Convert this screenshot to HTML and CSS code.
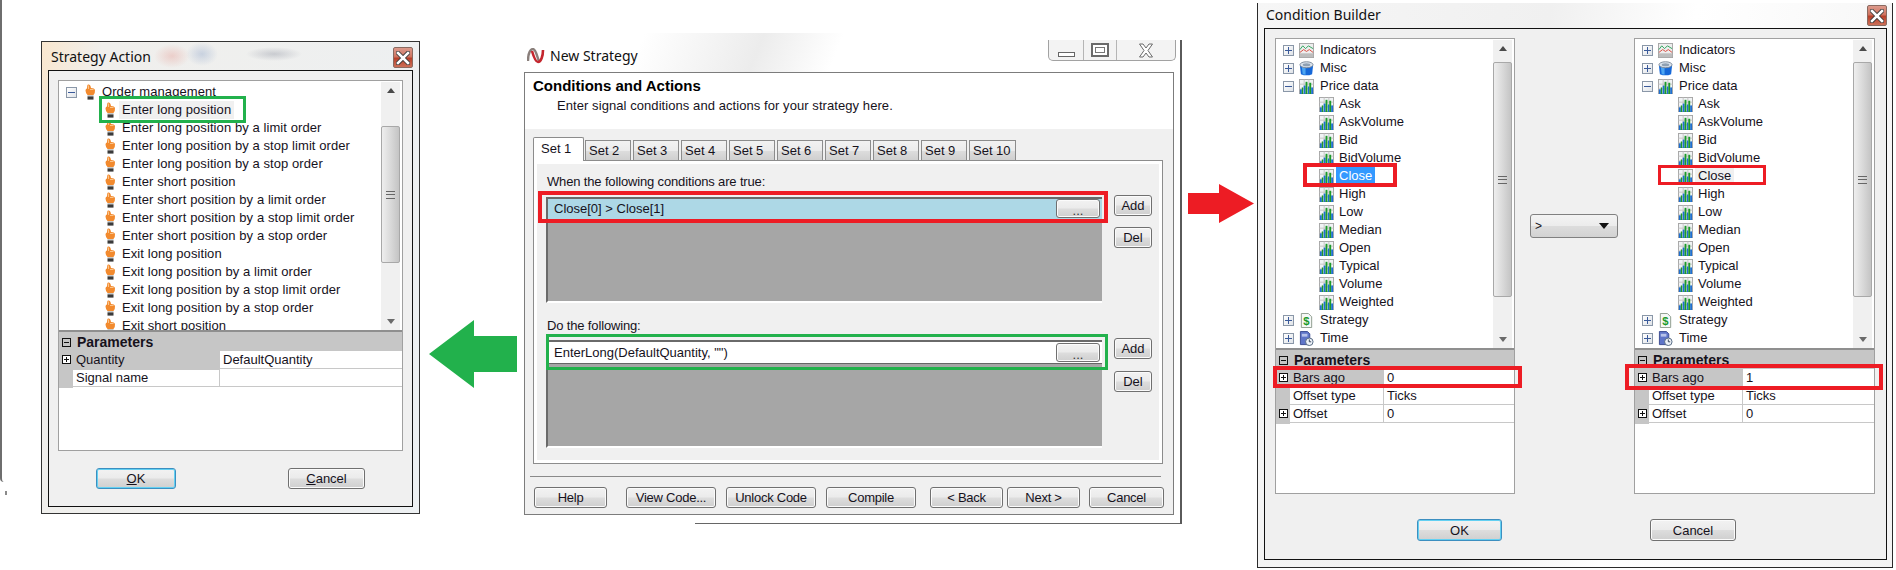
FILE: index.html
```html
<!DOCTYPE html>
<html lang="en">
<head>
<meta charset="utf-8">
<title>Strategy builder walkthrough</title>
<link rel="stylesheet" href="styles.css">
</head>
<body>
<svg class="defs" width="0" height="0" aria-hidden="true">
  <defs>
    <symbol id="hand" viewBox="0 0 11 16">
      <path d="M3 0.5 Q5 0 5.5 2 L6 4 Q9.5 4 10 6 Q10.3 9 8.5 11 L2.5 11 Q0.5 9 0.5 6.5 Q0.7 4.5 2 4.5 L2.2 2 Q2.4 0.8 3 0.5 Z" fill="#f28a2e"/>
      <path d="M3.5 1.5 L3.5 5 M5 5.5 L8.5 5.5" stroke="#fbc48a" stroke-width="1" fill="none"/>
      <rect x="2.5" y="11" width="6" height="1.4" fill="#c8c8c8"/>
      <rect x="2.5" y="12.4" width="6" height="3.2" fill="#3a3a3a"/>
    </symbol>
    <symbol id="bars" viewBox="0 0 16 16">
      <rect x="0.5" y="0.5" width="15" height="15" fill="#f1f3f5" stroke="#a5a5a5"/>
      <path d="M0.5 5.5H15.5M0.5 10.5H15.5M5.5 0.5V15.5M10.5 0.5V15.5" stroke="#c4c4c4"/>
      <rect x="1" y="11" width="2" height="5" fill="#1f6fd0"/>
      <rect x="3" y="9" width="1.5" height="7" fill="#1c9a2a"/>
      <rect x="5" y="7" width="2" height="9" fill="#1f6fd0"/>
      <rect x="7" y="3" width="2" height="13" fill="#1c9a2a"/>
      <rect x="9.5" y="8" width="1.5" height="8" fill="#1f6fd0"/>
      <rect x="11" y="4" width="2" height="12" fill="#1c9a2a"/>
      <rect x="13" y="9" width="2" height="7" fill="#1f6fd0"/>
    </symbol>
    <symbol id="lines" viewBox="0 0 16 16">
      <rect x="0.5" y="0.5" width="15" height="15" fill="#eeeeee" stroke="#a5a5a5"/>
      <rect x="1" y="11" width="14" height="4" fill="#bdbdbd"/>
      <path d="M1 7 L4 3 L7 6 L10 3 L15 6" stroke="#2aa35a" fill="none"/>
      <path d="M1 10 L5 7 L8 9 L11 7 L15 10" stroke="#d8463c" fill="none"/>
    </symbol>
    <symbol id="bucket" viewBox="0 0 16 16">
      <path d="M1 5 L2 14 Q8 16.5 14 14 L15 5 Z" fill="#1668d8"/>
      <path d="M3 6 L4 14 L7 14.6 L7 6 Z" fill="#4da6f2"/>
      <ellipse cx="8" cy="4" rx="7" ry="3.2" fill="#d9e2ec" stroke="#7d8a99"/>
      <ellipse cx="8" cy="4" rx="4" ry="1.6" fill="#8fa0b2"/>
    </symbol>
    <symbol id="doc" viewBox="0 0 16 16">
      <path d="M2.5 0.5 H10 L13.5 4 V15.5 H2.5 Z" fill="#f6f8f6" stroke="#8c9a8c"/>
      <text x="8" y="12.5" class="doc-s">$</text>
    </symbol>
    <symbol id="clock" viewBox="0 0 16 16">
      <path d="M1.5 0.5 H9 L11.5 3 V14.5 H1.5 Z" fill="#5f75c8" stroke="#3a4a90"/>
      <rect x="3" y="3" width="6" height="3" fill="#b7c3ea"/>
      <circle cx="11" cy="11.5" r="4" fill="#eef2f8" stroke="#4f647e"/>
      <path d="M11 9 V11.5 H13" stroke="#2f3f55" fill="none"/>
    </symbol>
    <symbol id="x" viewBox="0 0 14 14">
      <path d="M2 2 L12 12 M12 2 L2 12" stroke="#3a3a3a" stroke-width="4.4" stroke-linecap="square"/>
      <path d="M2 2 L12 12 M12 2 L2 12" stroke="#ffffff" stroke-width="2.6" stroke-linecap="square"/>
    </symbol>
  </defs>
</svg>

<div class="desk-edge"></div>
<div class="desk-speck"></div>

<section class="win win-action">
  <header class="titlebar"><span class="title">Strategy Action</span>
    <span class="close-btn"><svg width="14" height="14"><use href="#x"/></svg></span>
  </header>
  <div class="frame frame-action">
    <div class="panel panel-action">
      <div class="tree tree-action">
        <ul class="tree-list">
          <li class="row hand-root"><span class="exp minus"></span><svg class="ic-hand"><use href="#hand"/></svg>Order management</li>
          <li class="row hand-child"><svg class="ic-hand"><use href="#hand"/></svg><span class="sel">Enter long position</span></li>
          <li class="row hand-child"><svg class="ic-hand"><use href="#hand"/></svg>Enter long position by a limit order</li>
          <li class="row hand-child"><svg class="ic-hand"><use href="#hand"/></svg>Enter long position by a stop limit order</li>
          <li class="row hand-child"><svg class="ic-hand"><use href="#hand"/></svg>Enter long position by a stop order</li>
          <li class="row hand-child"><svg class="ic-hand"><use href="#hand"/></svg>Enter short position</li>
          <li class="row hand-child"><svg class="ic-hand"><use href="#hand"/></svg>Enter short position by a limit order</li>
          <li class="row hand-child"><svg class="ic-hand"><use href="#hand"/></svg>Enter short position by a stop limit order</li>
          <li class="row hand-child"><svg class="ic-hand"><use href="#hand"/></svg>Enter short position by a stop order</li>
          <li class="row hand-child"><svg class="ic-hand"><use href="#hand"/></svg>Exit long position</li>
          <li class="row hand-child"><svg class="ic-hand"><use href="#hand"/></svg>Exit long position by a limit order</li>
          <li class="row hand-child"><svg class="ic-hand"><use href="#hand"/></svg>Exit long position by a stop limit order</li>
          <li class="row hand-child"><svg class="ic-hand"><use href="#hand"/></svg>Exit long position by a stop order</li>
          <li class="row hand-child"><svg class="ic-hand"><use href="#hand"/></svg>Exit short position</li>
        </ul>
        <div class="sb sb-action"><span class="sb-up"></span><span class="thumb"><i></i></span><span class="sb-down"></span></div>
      </div>
      <div class="params params-action">
        <div class="p-head"><span class="gexp minus"></span>Parameters</div>
        <div class="p-row"><span class="p-gut"><span class="gexp plus"></span></span><span class="p-name grey">Quantity</span><span class="p-val">DefaultQuantity</span></div>
        <div class="p-row"><span class="p-gut"></span><span class="p-name">Signal name</span><span class="p-val"></span></div>
      </div>
    </div>
    <div class="foot foot-action">
      <button class="btn btn-def w80"><u>O</u>K</button>
      <button class="btn w77"><u>C</u>ancel</button>
    </div>
  </div>
  <div class="hl hl-green hl-enter"></div>
</section>

<svg class="arrow arrow-green" viewBox="0 0 88 68" aria-hidden="true"><path d="M0 34 L45 0 V16 H88 V52 H45 V68 Z" fill="#22b14c"/></svg>

<section class="win win-new">
  <header class="titlebar titlebar-new">
    <svg class="logo" width="18" height="16" viewBox="0 0 18 16"><path d="M1 13 C1 4 4 1 6 1 C9 1 10 9 12 13" fill="none" stroke="#8a7f7b" stroke-width="2.4"/><path d="M5 3 C7 10 9 14 11 14 C14 14 16 8 16 2" fill="none" stroke="#c4262e" stroke-width="2.6"/></svg>
    <span class="title">New Strategy</span>
    <div class="winctl"><span class="wc wc-min"><i></i></span><span class="wc wc-max"><i></i></span><span class="wc wc-close"><svg width="16" height="15" viewBox="0 0 16 15"><path d="M1.5 1H5L8 5 11 1H14.5L10 7.5 14.5 14H11L8 10 5 14H1.5L6 7.5Z" fill="#fff" stroke="#6b6b6b"/></svg></span></div>
  </header>
  <div class="frame frame-new">
    <div class="wiz-head">
      <div class="wiz-title">Conditions and Actions</div>
      <div class="wiz-sub">Enter signal conditions and actions for your strategy here.</div>
    </div>
    <div class="tabs">
      <span class="tab tab-on">Set 1</span><span class="tab">Set 2</span><span class="tab">Set 3</span><span class="tab">Set 4</span><span class="tab">Set 5</span><span class="tab">Set 6</span><span class="tab">Set 7</span><span class="tab">Set 8</span><span class="tab">Set 9</span><span class="tab tab-last">Set 10</span>
    </div>
    <div class="pane">
      <div class="lbl">When the following conditions are true:</div>
      <div class="block">
        <div class="cgrid">
          <div class="crow crow-blue"><span class="ctext">Close[0] &gt; Close[1]</span><button class="btn btn-dots">...</button></div>
        </div>
        <div class="side"><button class="btn btn-side">Add</button><button class="btn btn-side">Del</button></div>
      </div>
      <div class="lbl lbl-2">Do the following:</div>
      <div class="block block-2">
        <div class="cgrid">
          <div class="crow"><span class="ctext">EnterLong(DefaultQuantity, "")</span><button class="btn btn-dots">...</button></div>
        </div>
        <div class="side side-2"><button class="btn btn-side">Add</button><button class="btn btn-side">Del</button></div>
      </div>
    </div>
    <div class="sep"></div>
    <div class="wiz-foot">
      <button class="btn w73">Help</button>
      <button class="btn w90 m19">View Code...</button>
      <button class="btn w90 m10">Unlock Code</button>
      <button class="btn w90 m10">Compile</button>
      <button class="btn w73 m14">&lt; Back</button>
      <button class="btn w73 m4">Next &gt;</button>
      <button class="btn w75 m9">Cancel</button>
    </div>
  </div>
  <div class="hl hl-red hl-cond"></div>
  <div class="hl hl-green hl-do"></div>
  <div class="win-new-line"></div>
</section>

<svg class="arrow arrow-red" viewBox="0 0 66 39" aria-hidden="true"><path d="M0 9 H31 V0 L66 19.5 L31 39 V30 H0 Z" fill="#ed1c24"/></svg>

<section class="win win-cond">
  <header class="titlebar titlebar-cond"><span class="title">Condition Builder</span>
    <span class="close-btn close-cond"><svg width="14" height="14"><use href="#x"/></svg></span>
  </header>
  <div class="frame frame-cond">
    <div class="cb-main">
      <div class="panel panel-cb">
        <div class="tree tree-cb">
          <ul class="tree-list">
            <li class="row root"><span class="exp plus"></span><svg class="ic"><use href="#lines"/></svg>Indicators</li>
            <li class="row root"><span class="exp plus"></span><svg class="ic"><use href="#bucket"/></svg>Misc</li>
            <li class="row root"><span class="exp minus"></span><svg class="ic"><use href="#bars"/></svg>Price data</li>
            <li class="row child"><svg class="ic"><use href="#bars"/></svg>Ask</li>
            <li class="row child"><svg class="ic"><use href="#bars"/></svg>AskVolume</li>
            <li class="row child"><svg class="ic"><use href="#bars"/></svg>Bid</li>
            <li class="row child"><svg class="ic"><use href="#bars"/></svg>BidVolume</li>
            <li class="row child"><svg class="ic"><use href="#bars"/></svg><span class="sel sel-blue">Close</span></li>
            <li class="row child"><svg class="ic"><use href="#bars"/></svg>High</li>
            <li class="row child"><svg class="ic"><use href="#bars"/></svg>Low</li>
            <li class="row child"><svg class="ic"><use href="#bars"/></svg>Median</li>
            <li class="row child"><svg class="ic"><use href="#bars"/></svg>Open</li>
            <li class="row child"><svg class="ic"><use href="#bars"/></svg>Typical</li>
            <li class="row child"><svg class="ic"><use href="#bars"/></svg>Volume</li>
            <li class="row child"><svg class="ic"><use href="#bars"/></svg>Weighted</li>
            <li class="row root"><span class="exp plus"></span><svg class="ic"><use href="#doc"/></svg>Strategy</li>
            <li class="row root"><span class="exp plus"></span><svg class="ic"><use href="#clock"/></svg>Time</li>
          </ul>
          <div class="sb sb-cb"><span class="sb-up"></span><span class="thumb"><i></i></span><span class="sb-down"></span></div>
        </div>
        <div class="params params-cb">
          <div class="p-head"><span class="gexp minus"></span>Parameters</div>
          <div class="p-row"><span class="p-gut"><span class="gexp plus"></span></span><span class="p-name grey">Bars ago</span><span class="p-val">0</span></div>
          <div class="p-row"><span class="p-gut"></span><span class="p-name">Offset type</span><span class="p-val">Ticks</span></div>
          <div class="p-row"><span class="p-gut"><span class="gexp plus"></span></span><span class="p-name">Offset</span><span class="p-val">0</span></div>
        </div>
      </div>
      <div class="combo"><span>&gt;</span><i class="combo-arrow"></i></div>
      <div class="panel panel-cb panel-cb-r">
        <div class="tree tree-cb">
          <ul class="tree-list">
            <li class="row root"><span class="exp plus"></span><svg class="ic"><use href="#lines"/></svg>Indicators</li>
            <li class="row root"><span class="exp plus"></span><svg class="ic"><use href="#bucket"/></svg>Misc</li>
            <li class="row root"><span class="exp minus"></span><svg class="ic"><use href="#bars"/></svg>Price data</li>
            <li class="row child"><svg class="ic"><use href="#bars"/></svg>Ask</li>
            <li class="row child"><svg class="ic"><use href="#bars"/></svg>AskVolume</li>
            <li class="row child"><svg class="ic"><use href="#bars"/></svg>Bid</li>
            <li class="row child"><svg class="ic"><use href="#bars"/></svg>BidVolume</li>
            <li class="row child"><svg class="ic"><use href="#bars"/></svg><span class="sel">Close</span></li>
            <li class="row child"><svg class="ic"><use href="#bars"/></svg>High</li>
            <li class="row child"><svg class="ic"><use href="#bars"/></svg>Low</li>
            <li class="row child"><svg class="ic"><use href="#bars"/></svg>Median</li>
            <li class="row child"><svg class="ic"><use href="#bars"/></svg>Open</li>
            <li class="row child"><svg class="ic"><use href="#bars"/></svg>Typical</li>
            <li class="row child"><svg class="ic"><use href="#bars"/></svg>Volume</li>
            <li class="row child"><svg class="ic"><use href="#bars"/></svg>Weighted</li>
            <li class="row root"><span class="exp plus"></span><svg class="ic"><use href="#doc"/></svg>Strategy</li>
            <li class="row root"><span class="exp plus"></span><svg class="ic"><use href="#clock"/></svg>Time</li>
          </ul>
          <div class="sb sb-cb"><span class="sb-up"></span><span class="thumb"><i></i></span><span class="sb-down"></span></div>
        </div>
        <div class="params params-cb">
          <div class="p-head"><span class="gexp minus"></span>Parameters</div>
          <div class="p-row"><span class="p-gut"><span class="gexp plus"></span></span><span class="p-name grey">Bars ago</span><span class="p-val">1</span></div>
          <div class="p-row"><span class="p-gut"></span><span class="p-name">Offset type</span><span class="p-val">Ticks</span></div>
          <div class="p-row"><span class="p-gut"><span class="gexp plus"></span></span><span class="p-name">Offset</span><span class="p-val">0</span></div>
        </div>
      </div>
    </div>
    <div class="foot foot-cond">
      <button class="btn btn-def w85">OK</button>
      <button class="btn w86">Cancel</button>
    </div>
  </div>
  <div class="hl hl-red hl-close-l"></div>
  <div class="hl hl-red hl-close-r"></div>
  <div class="hl hl-red hl-bars-l"></div>
  <div class="hl hl-red hl-bars-r"></div>
</section>
</body>
</html>
```
FILE: styles.css
```css
* { box-sizing: border-box; }
html, body { margin: 0; padding: 0; }
body {
  width: 1896px;
  height: 570px;
  position: relative;
  overflow: hidden;
  background: #ffffff;
  font-family: "Liberation Sans", Arial, sans-serif;
  font-size: 13px;
  color: #16121c;
}
ul { list-style: none; margin: 0; padding: 0; }
.defs { position: absolute; }
.doc-s { font: bold 12px "Liberation Sans", sans-serif; fill: #1c9a2a; text-anchor: middle; }

.desk-edge {
  position: absolute; left: 0; top: 0; width: 4px; height: 482px;
  border-left: 2px solid #6e6e6e; border-bottom-left-radius: 4px;
}
.desk-speck { position: absolute; left: 5px; top: 491px; width: 2px; height: 4px; background: #8a8a8a; }

/* windows */
.win { position: absolute; }
.win-action {
  left: 41px; top: 41px; width: 379px; height: 473px;
  border: 1px solid #333;
  padding: 0 6px 6px;
  background:
    radial-gradient(ellipse 18px 12px at 130px 14px, rgba(225,130,120,.3), transparent),
    radial-gradient(ellipse 16px 12px at 160px 12px, rgba(110,140,190,.3), transparent),
    radial-gradient(ellipse 28px 7px at 232px 12px, rgba(130,135,150,.35), transparent),
    linear-gradient(100deg, #f9e7cf 0, #f0efec 60px, #edf0f2 100%);
}
.win-new {
  left: 518px; top: 33px; width: 664px; height: 491px;
  padding: 0 6px 8px;
}
.win-new::after { content: ""; position: absolute; right: 0; top: 7px; bottom: 0; width: 2px; background: #5a5a5a; }
.win-new-line { position: absolute; left: 177px; right: 0; bottom: 0; height: 1px; background: #666; }
.win-cond {
  left: 1257px; top: 3px; width: 636px; height: 565px;
  border: 1px solid #2a2a2a;
  border-top: 0;
  padding: 0 5px 6px 6px;
  background: linear-gradient(100deg, #f6f6f6 0, #f0f0f0 40%, #fff 60%, #f3f3f3 100%);
}

.titlebar { display: flex; align-items: center; height: 28px; padding-left: 3px; position: relative; }
.titlebar-new {
  height: 39px; padding: 6px 0 0 3px;
  background: linear-gradient(112deg, #fff 18%, #ececec 36%, #fff 48%, #fff 100%);
}
.titlebar-cond { height: 25px; padding: 0 0 2px 2px; }
.title { font: 14px "Noto Sans", sans-serif; color: #111; }
.titlebar-new .title { margin-left: 5px; }
.close-btn {
  position: absolute; right: 0; top: 5px; width: 20px; height: 21px;
  display: flex; align-items: center; justify-content: center;
  border: 1px solid #8a6a60; border-radius: 2px;
  background: linear-gradient(#dc9a8c 0, #cf7460 45%, #b8402a 55%, #cc6f58 100%);
}
.close-cond { top: 2px; }

.winctl {
  position: absolute; right: 0; top: 7px; width: 128px; height: 21px;
  display: flex;
  border: 1px solid #a2a2a2; border-top: 0;
  border-radius: 0 0 5px 5px;
  background: #f3f3f3;
}
.wc { position: relative; display: flex; justify-content: center; border-right: 1px solid #b5b5b5; }
.wc-min { width: 35px; }
.wc-max { width: 33px; }
.wc-close { flex: 1; border-right: 0; padding-top: 3px; }
.wc-min i { display: block; width: 17px; height: 5px; margin-top: 12px; border: 1px solid #666; background: #fff; }
.wc-max i { display: block; width: 18px; height: 14px; margin-top: 3px; border: 2px solid #6a6a6a; background: #fff; box-shadow: inset 0 0 0 2px #fff, inset 0 0 0 3px #777; }

.frame { border: 1px solid #111; background: #f0f0f0; }
.frame-action { height: 437px; padding: 9px 9px 0; }
.frame-new { height: 443px; width: 650px; border-color: #7c7c7c; }
.frame-cond { height: 532px; padding: 9px 0 0 10px; }

/* tree panel */
.panel { border: 1px solid #a0a0a0; background: #fff; display: flex; flex-direction: column; }
.panel-action { width: 345px; height: 371px; }
.panel-cb { width: 240px; height: 456px; }
.panel-cb-r { width: 241px; }
.tree { display: flex; border-bottom: 2px solid #8f8f8f; overflow: hidden; }
.tree-action { height: 251px; letter-spacing: .08px; }
.tree-cb { height: 311px; }
.tree-list { flex: 1; min-width: 0; padding-top: 2px; }
.row { height: 18px; line-height: 18px; display: flex; align-items: center; white-space: nowrap; }
.root { padding-left: 7px; }
.child { padding-left: 43px; }
.hand-root { padding-left: 7px; }
.hand-child { padding-left: 46px; }
.ic { width: 15px; height: 15px; margin-right: 6px; flex: none; }
.child .ic { margin-right: 5px; }
.exp {
  width: 11px; height: 11px; flex: none; margin-right: 5px; position: relative;
  border: 1px solid #8a97a8;
  background: linear-gradient(135deg, #fff, #dfe3e8);
}
.exp::before { content: ""; position: absolute; left: 1px; right: 1px; top: 4px; height: 1px; background: #3a5a9a; }
.exp.plus::after { content: ""; position: absolute; top: 1px; bottom: 1px; left: 4px; width: 1px; background: #3a5a9a; }
.ic-hand { width: 11px; height: 16px; flex: none; margin-right: 6px; }
.hand-root .exp { margin-right: 8px; }
.sel { background: #f0f0f0; padding: 0 3px; margin-left: -3px; height: 18px; }
.sel-blue { background: #3399ff; color: #fff; }

/* scrollbars */
.sb { width: 19px; flex: none; display: flex; flex-direction: column; background: #f0f0f0; margin: 1px 2px 0 0; }
.sb-up, .sb-down { flex: none; height: 17px; display: flex; align-items: center; justify-content: center; }
.sb-up::before { content: ""; border: 4px solid transparent; border-top: 0; border-bottom: 5px solid #4a4a4a; }
.sb-down::before { content: ""; border: 4px solid transparent; border-bottom: 0; border-top: 5px solid #6a6a6a; }
.thumb {
  display: flex; align-items: center; justify-content: center;
  margin-left: 0; border: 1px solid #a8a8a8; border-radius: 2px;
  background: linear-gradient(90deg, #eeeeee 0, #dcdcdc 45%, #c4c4c4 100%);
}
.thumb i { width: 9px; height: 8px; border-top: 1px solid #666; border-bottom: 1px solid #666; position: relative; display: block; }
.thumb i::after { content: ""; position: absolute; left: 0; right: 0; top: 2px; height: 2px; border-top: 1px solid #666; }
.sb-action .thumb { height: 137px; margin-top: 27px; margin-bottom: auto; }
.sb-cb .thumb { height: 235px; margin-top: 5px; margin-bottom: auto; }

/* parameter grid */
.p-head { height: 19px; display: flex; align-items: center; background: #c6c6c6; font-weight: bold; font-size: 14px; padding: 1px 0 0 3px; }
.p-head .gexp { margin-right: 6px; }
.p-row { height: 18px; line-height: 18px; display: grid; border-bottom: 1px solid #c8c8c8; background: #fff; }
.params-action .p-row { grid-template-columns: 14px 147px 1fr; }
.params-cb .p-row { grid-template-columns: 14px 94px 1fr; }
.p-gut { background: #c6c6c6; padding: 4px 0 0 3px; margin-bottom: -1px; }
.p-name { padding-left: 3px; border-right: 1px solid #c8c8c8; }
.p-name.grey { background: #c6c6c6; border-right-color: #c6c6c6; margin-bottom: -1px; }
.p-val { padding-left: 3px; }
.gexp {
  display: block; width: 9px; height: 9px; position: relative; flex: none;
  border: 1px solid #111; background: #fff;
}
.gexp::before { content: ""; position: absolute; left: 1px; right: 1px; top: 3px; height: 1px; background: #111; }
.gexp.plus::after { content: ""; position: absolute; top: 1px; bottom: 1px; left: 3px; width: 1px; background: #111; }
.gexp.minus { background: transparent; }

/* buttons */
.btn {
  font: 13px "Liberation Sans", Arial, sans-serif; color: #16121c;
  height: 21px; padding: 0;
  border: 1px solid #707070; border-radius: 3px;
  background: linear-gradient(#f2f2f2 0, #ebebeb 48%, #dddddd 52%, #cfcfcf 100%);
  box-shadow: inset 0 0 0 1px #fbfbfb;
}
.btn-def { border-color: #3c8fc0; box-shadow: inset 0 0 0 1px #63d0f2; }
.foot { display: flex; }
.foot-action { margin: 17px 0 0 38px; gap: 112px; }
.foot-cond { margin: 25px 0 0 142px; gap: 148px; }
.foot-cond .btn { height: 22px; }
.w73 { width: 73px; } .w75 { width: 75px; } .w77 { width: 77px; } .w80 { width: 80px; }
.w85 { width: 85px; } .w86 { width: 86px; } .w90 { width: 90px; }
.m4 { margin-left: 4px; } .m9 { margin-left: 9px; } .m10 { margin-left: 10px; } .m14 { margin-left: 14px; } .m19 { margin-left: 19px; }

/* wizard */
.wiz-head { height: 56px; background: #fff; padding: 5px 0 0 8px; }
.wiz-title { font-weight: bold; font-size: 15px; line-height: 16px; color: #000; }
.wiz-sub { margin: 4px 0 0 24px; line-height: 16px; letter-spacing: .07px; }
.tabs { display: flex; align-items: flex-end; height: 23px; margin: 8px 0 0 8px; position: relative; z-index: 1; }
.tab {
  width: 46px; height: 20px; margin-right: 2px; line-height: 19px; padding-left: 3px;
  border: 1px solid #8c8c8c; border-bottom: 0;
  background: linear-gradient(#f2f2f2, #ebebeb 50%, #dcdcdc 55%, #cfcfcf);
}
.tab-on {
  width: 51px; height: 24px; margin-right: 1px; background: #fff; line-height: 21px; padding-left: 7px;
  border-radius: 2px 2px 0 0; margin-bottom: -1px;
}
.tab-last { width: 47px; }
.pane {
  width: 630px; height: 304px; margin-left: 8px;
  border: 1px solid #8c8c8c;
  box-shadow: inset 0 0 0 3px #fff;
  padding: 13px 0 0 12px;
}
.lbl { line-height: 15px; margin-left: 1px; letter-spacing: -.15px; }
.lbl-2 { margin-top: 15px; }
.block { display: flex; margin-top: 8px; }
.block-2 { margin-top: 7px; }
.cgrid {
  width: 556px; height: 106px; background: #a6a6a6;
  border-top: 2px solid #6a6a6a; border-left: 2px solid #6a6a6a;
  border-bottom: 2px solid #fff;
}
.block-2 .cgrid { height: 108px; }
.crow {
  height: 22px; display: flex; align-items: center; justify-content: space-between;
  background: #fff; border-bottom: 1px solid #666; padding: 0 2px 0 6px;
}
.crow-blue { background: #add8e6; padding-bottom: 2px; }
.btn-dots { width: 44px; height: 19px; line-height: 22px; color: #333; }
.side { display: flex; flex-direction: column; gap: 11px; margin: -2px 0 0 12px; }
.side-2 { margin-top: -2px; gap: 12px; }
.btn-side { width: 38px; }
.sep { margin: 12px 12px 0 5px; height: 1px; background: #8a8a8a; }
.wiz-foot { display: flex; margin: 10px 0 0 9px; }
.wiz-foot .btn { letter-spacing: -.25px; }

/* condition builder */
.cb-main { display: flex; align-items: flex-start; }
.combo {
  width: 88px; height: 24px; margin: 176px 16px 0 15px; padding: 0 8px 0 4px;
  display: flex; align-items: center; justify-content: space-between;
  border: 1px solid #808080; border-radius: 3px;
  background: linear-gradient(#f3f3f3, #ececec 48%, #dcdcdc 52%, #d2d2d2);
  font-size: 12px;
}
.combo-arrow { border: 5px solid transparent; border-bottom: 0; border-top: 6px solid #111; border-left-width: 5px; }

/* highlights */
.hl { position: absolute; pointer-events: none; }
.hl-green { border: 3px solid #22b14c; }
.hl-red { border: 4px solid #ed1c24; }
.hl-enter { left: 57px; top: 54px; width: 147px; height: 27px; border-width: 3.5px; }
.hl-cond { left: 20px; top: 158px; width: 570px; height: 32px; }
.hl-do { left: 28px; top: 301px; width: 562px; height: 36px; }
.hl-close-l { left: 45px; top: 160px; width: 94px; height: 24px; }
.hl-close-r { left: 400px; top: 162px; width: 108px; height: 20px; border-width: 3.5px; }
.hl-bars-l { left: 15px; top: 363px; width: 249px; height: 22px; }
.hl-bars-r { left: 367px; top: 361px; width: 258px; height: 26px; }

/* arrows */
.arrow { position: absolute; }
.arrow-green { left: 429px; top: 320px; width: 88px; height: 68px; }
.arrow-red { left: 1188px; top: 184px; width: 66px; height: 39px; }
```
